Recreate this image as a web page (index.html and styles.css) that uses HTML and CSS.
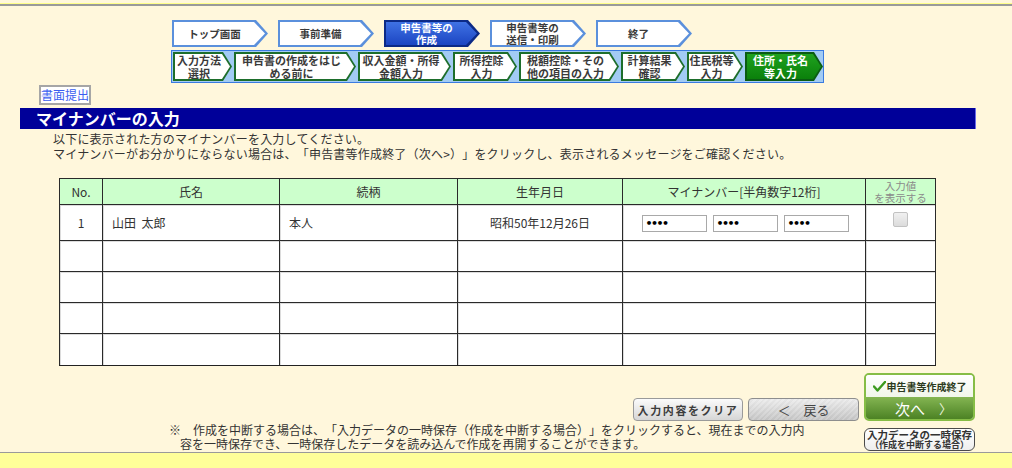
FILE: index.html
```html
<!DOCTYPE html>
<html lang="ja">
<head>
<meta charset="utf-8">
<title>マイナンバーの入力</title>
<link rel="stylesheet" href="styles.css">
</head>
<body>
<div class="topline"></div>

<nav class="nav">
  <ol class="main-steps">
    <li class="mstep"><span class="mstep-in">トップ画面</span></li>
    <li class="mstep"><span class="mstep-in">事前準備</span></li>
    <li class="mstep is-active"><span class="mstep-in">申告書等の<br>作成</span></li>
    <li class="mstep"><span class="mstep-in">申告書等の<br>送信・印刷</span></li>
    <li class="mstep"><span class="mstep-in">終了</span></li>
  </ol>
  <ol class="sub-steps">
    <li class="sstep w-a"><span class="sstep-in">入力方法<br>選択</span></li>
    <li class="sstep w-b"><span class="sstep-in">申告書の作成をはじ<br>める前に</span></li>
    <li class="sstep w-c"><span class="sstep-in">収入金額・所得<br>金額入力</span></li>
    <li class="sstep w-d"><span class="sstep-in">所得控除<br>入力</span></li>
    <li class="sstep w-e"><span class="sstep-in">税額控除・その<br>他の項目の入力</span></li>
    <li class="sstep w-d"><span class="sstep-in">計算結果<br>確認</span></li>
    <li class="sstep w-f"><span class="sstep-in">住民税等<br>入力</span></li>
    <li class="sstep w-g is-active"><span class="sstep-in">住所・氏名<br>等入力</span></li>
  </ol>
</nav>

<div class="paper-row"><button class="paper-btn" type="button">書面提出</button></div>

<h1 class="section-title">マイナンバーの入力</h1>

<p class="lead">以下に表示された方のマイナンバーを入力してください。<br>マイナンバーがお分かりにならない場合は、「申告書等作成終了（次へ&gt;）」をクリックし、表示されるメッセージをご確認ください。</p>

<table class="mn-table">
  <colgroup>
    <col class="c-no"><col class="c-name"><col class="c-rel"><col class="c-birth"><col class="c-num"><col class="c-show">
  </colgroup>
  <thead>
    <tr class="r-head">
      <th>No.</th><th>氏名</th><th>続柄</th><th>生年月日</th><th>マイナンバー[半角数字12桁]</th><th class="th-show">入力値<br>を表示する</th>
    </tr>
  </thead>
  <tbody>
    <tr class="r-first">
      <td class="t-center">1</td>
      <td class="t-left">山田&nbsp;&nbsp;太郎</td>
      <td class="t-left">本人</td>
      <td class="t-center">昭和50年12月26日</td>
      <td class="t-center"><span class="num-inputs"><input class="num" type="password" value="1234"><input class="num" type="password" value="5678"><input class="num" type="password" value="9012"></span></td>
      <td class="t-center"><input class="chk" type="checkbox" disabled></td>
    </tr>
    <tr class="r-empty"><td></td><td></td><td></td><td></td><td></td><td></td></tr>
    <tr class="r-empty"><td></td><td></td><td></td><td></td><td></td><td></td></tr>
    <tr class="r-empty"><td></td><td></td><td></td><td></td><td></td><td></td></tr>
    <tr class="r-last"><td></td><td></td><td></td><td></td><td></td><td></td></tr>
  </tbody>
</table>

<div class="actions">
  <div class="actions-main">
    <div class="btn-row">
      <button class="gbtn btn-clear" type="button">入力内容をクリア</button>
      <button class="gbtn btn-back" type="button">＜　戻る</button>
    </div>
    <p class="note">※　作成を中断する場合は、「入力データの一時保存（作成を中断する場合）」をクリックすると、現在までの入力内<br>容を一時保存でき、一時保存したデータを読み込んで作成を再開することができます。</p>
  </div>
  <div class="actions-side">
    <button class="finish-btn" type="button">
      <span class="finish-top"><svg class="check" width="13" height="11" viewBox="0 0 13 11"><path d="M1 5.5 L4.5 9.5 L12 1" fill="none" stroke="#3c9a1e" stroke-width="2.4" stroke-linecap="round" stroke-linejoin="round"/></svg>申告書等作成終了</span>
      <span class="finish-next">次へ<span class="arrow">〉</span></span>
    </button>
    <button class="save-btn" type="button"><span class="save-l1">入力データの一時保存</span><span class="save-l2">（作成を中断する場合）</span></button>
  </div>
</div>

<div class="page-foot"></div>
</body>
</html>
```

FILE: styles.css
```css
* { box-sizing: border-box; }
html, body { margin: 0; padding: 0; }
body {
  width: 1012px;
  height: 468px;
  overflow: hidden;
  background: #fff7dc;
  font-family: "Noto Sans CJK JP", "Liberation Sans", sans-serif;
  color: #333;
  font-size: 12px;
  text-spacing-trim: space-all;
}

.topline {
  margin-top: 3px;
  height: 3px;
  background: #ffff88;
  border-bottom: 2px solid #9a9a9a;
}

/* ---------- step navigation ---------- */
.nav { margin: 14px 0 0 171px; width: 654px; }

.main-steps {
  list-style: none;
  margin: 0 0 0 1px;
  padding: 0;
  display: flex;
  gap: 10px;
}
.mstep {
  width: 96px;
  height: 27px;
  padding: 2px;
  background: #5b90dc;
  clip-path: polygon(0 0, 84px 0, 96px 50%, 84px 100%, 0 100%);
  display: flex;
}
.mstep-in {
  flex: 1;
  background: #fff;
  clip-path: polygon(0 0, calc(100% - 12px) 0, calc(100% - 1px) 50%, calc(100% - 12px) 100%, 0 100%);
  display: flex;
  align-items: center;
  justify-content: center;
  padding-right: 11px;
  font-size: 10.5px;
  font-weight: bold;
  line-height: 12px;
  text-align: center;
  color: #3a3a3a;
}
.mstep.is-active { background: #0c2a86; }
.mstep.is-active .mstep-in {
  background: linear-gradient(#3f72e4, #1c45c2);
  color: #fff;
}

.sub-steps {
  list-style: none;
  margin: 3px 0 0;
  padding: 1px 0 1px 1px;
  width: 653px;
  height: 33px;
  display: flex;
  align-items: center;
  gap: 2px;
  background: #a2cbf4;
  border: 1px solid #3a7be0;
}
.sstep {
  height: 29px;
  padding: 2px;
  background: #1d6e2b;
  clip-path: polygon(0 0, calc(100% - 9px) 0, 100% 50%, calc(100% - 9px) 100%, 0 100%);
  display: flex;
}
.sstep-in {
  flex: 1;
  background: #fff;
  clip-path: polygon(0 0, calc(100% - 8px) 0, 100% 50%, calc(100% - 8px) 100%, 0 100%);
  display: flex;
  align-items: center;
  justify-content: center;
  padding-right: 7px;
  font-size: 11px;
  font-weight: bold;
  line-height: 13px;
  text-align: center;
  color: #3a3a3a;
  white-space: nowrap;
}
.w-a { width: 59px; }
.w-b { width: 122px; }
.w-c { width: 93px; }
.w-d { width: 64px; }
.w-e { width: 100px; }
.w-f { width: 56px; }
.w-g { width: 78px; }
.sstep.is-active { background: #0b5c12; }
.sstep.is-active .sstep-in {
  background: linear-gradient(#1fa21f, #0b800b);
  color: #fff;
}

/* ---------- paper button ---------- */
.paper-row { padding: 2px 0 0 39px; height: 22px; }
.paper-btn {
  display: block;
  height: 20px;
  width: 52px;
  padding: 0;
  border: 2px solid #a6a6a6;
  background: #fff;
  color: #3a5ef0;
  font-family: inherit;
  font-size: 12px;
  line-height: 16px;
}

/* ---------- title ---------- */
.section-title {
  margin: 3px 36px 0 20px;
  height: 21px;
  padding-left: 16px;
  background: #000099;
  border-right: 1px solid #6a6ae8;
  color: #fff;
  font-size: 16px;
  font-weight: bold;
  line-height: 21px;
}

.lead {
  margin: 2px 0 0 53px;
  font-size: 12px;
  line-height: 15px;
  letter-spacing: 0.2px;
  color: #333;
}

/* ---------- table ---------- */
.mn-table {
  margin: 17px 0 0 59px;
  width: 876px;
  border-collapse: collapse;
  table-layout: fixed;
  border: 1px solid #222;
  background: #fff;
}
.c-no { width: 43px; }
.c-name { width: 177px; }
.c-rel { width: 178px; }
.c-birth { width: 165px; }
.c-num { width: 243px; }
.c-show { width: 70px; }

.mn-table th,
.mn-table td {
  border: 1px solid #2a2a2a;
  padding: 0;
  font-size: 12px;
  color: #333;
}
.mn-table td { box-shadow: inset 1px 1px 0 #dcdcdc; }
.mn-table th {
  background: #ccffcc;
  font-weight: normal;
  line-height: 14px;
}
.mn-table .th-show {
  font-size: 10.5px;
  line-height: 12px;
  color: #8a8a8a;
}
.r-head { height: 26px; }
.r-first { height: 36px; }
.r-empty { height: 31px; }
.r-last { height: 32px; }
.r-last td { border-bottom: 1px solid #222; }

.t-center { text-align: center; }
.t-left { padding-left: 9px !important; }

.num-inputs { display: inline-flex; gap: 6px; vertical-align: middle; margin-left: 2px; }
.num {
  width: 65px;
  height: 17px;
  padding: 0 3px;
  border: 1px solid #a9a9a9;
  background: #fff;
  font-size: 11px;
  font-family: "DejaVu Sans", sans-serif;
  font-weight: bold;
  color: #000;
  letter-spacing: -1.5px;
}
.chk {
  appearance: none;
  -webkit-appearance: none;
  margin: 0 0 6px 0;
  width: 15px;
  height: 15px;
  border: 1px solid #c2c2c2;
  border-radius: 2px;
  background: linear-gradient(#f0f0f0, #dcdcdc);
  vertical-align: middle;
}

/* ---------- bottom actions ---------- */
.actions {
  display: flex;
  gap: 5px;
  margin: 7px 0 0 169px;
}
.actions-main { width: 690px; padding-top: 25px; }
.btn-row { display: flex; justify-content: flex-end; gap: 5px; }
.gbtn {
  height: 23px;
  border: 1px solid #9a9a9a;
  border-radius: 4px;
  background: linear-gradient(#fbfbfb, #d6d6d6);
  color: #3c3c3c;
  font-family: inherit;
  font-weight: bold;
  padding: 0;
}
.btn-clear {
  width: 110px;
  font-size: 11px;
  letter-spacing: 1.6px;
}
.btn-back {
  width: 111px;
  font-size: 13px;
  font-weight: normal;
  color: #444;
  border-color: #8e8e8e;
  background:
    repeating-linear-gradient(135deg, rgba(255,255,255,0.12) 0 2px, rgba(0,0,0,0.02) 2px 4px),
    linear-gradient(#ececec, #c6c6c6);
}
.note {
  margin: 2px 0 0;
  padding-left: 11px;
  text-indent: -11px;
  font-size: 12px;
  line-height: 14px;
  white-space: nowrap;
  color: #333;
}

.actions-side {
  width: 111px;
  display: flex;
  flex-direction: column;
  gap: 7px;
}
.finish-btn {
  height: 48px;
  padding: 0;
  border: 2px solid #86bd46;
  border-radius: 5px;
  overflow: hidden;
  display: flex;
  flex-direction: column;
  background: #fff;
  font-family: inherit;
}
.finish-top {
  height: 22px;
  width: 100%;
  display: flex;
  align-items: center;
  justify-content: center;
  gap: 1px;
  font-size: 10px;
  font-weight: bold;
  color: #2c3a20;
  background: linear-gradient(#ffffff, #f1f6ea);
}
.check { flex: none; }
.finish-next {
  flex: 1;
  width: 100%;
  display: flex;
  align-items: center;
  justify-content: center;
  gap: 14px;
  padding-left: 8px;
  background: linear-gradient(#84b552, #4c8224);
  color: #fff;
  font-size: 15px;
  line-height: 1;
}
.finish-next .arrow { font-size: 13px; color: #e8f3dc; }

.save-btn {
  height: 23px;
  padding: 0;
  border: 1.5px solid #4a4a4a;
  border-radius: 6px;
  background: linear-gradient(#ffffff, #eeeeee);
  display: flex;
  flex-direction: column;
  align-items: center;
  justify-content: center;
  font-family: inherit;
  color: #333;
  font-weight: bold;
}
.save-l1 { font-size: 10.5px; line-height: 10px; white-space: nowrap; }
.save-l2 { font-size: 9px; line-height: 10px; white-space: nowrap; }

.page-foot {
  margin-top: 1px;
  height: 30px;
  border-top: 1px solid #9a9a9a;
  background: #ffff99;
}
```
